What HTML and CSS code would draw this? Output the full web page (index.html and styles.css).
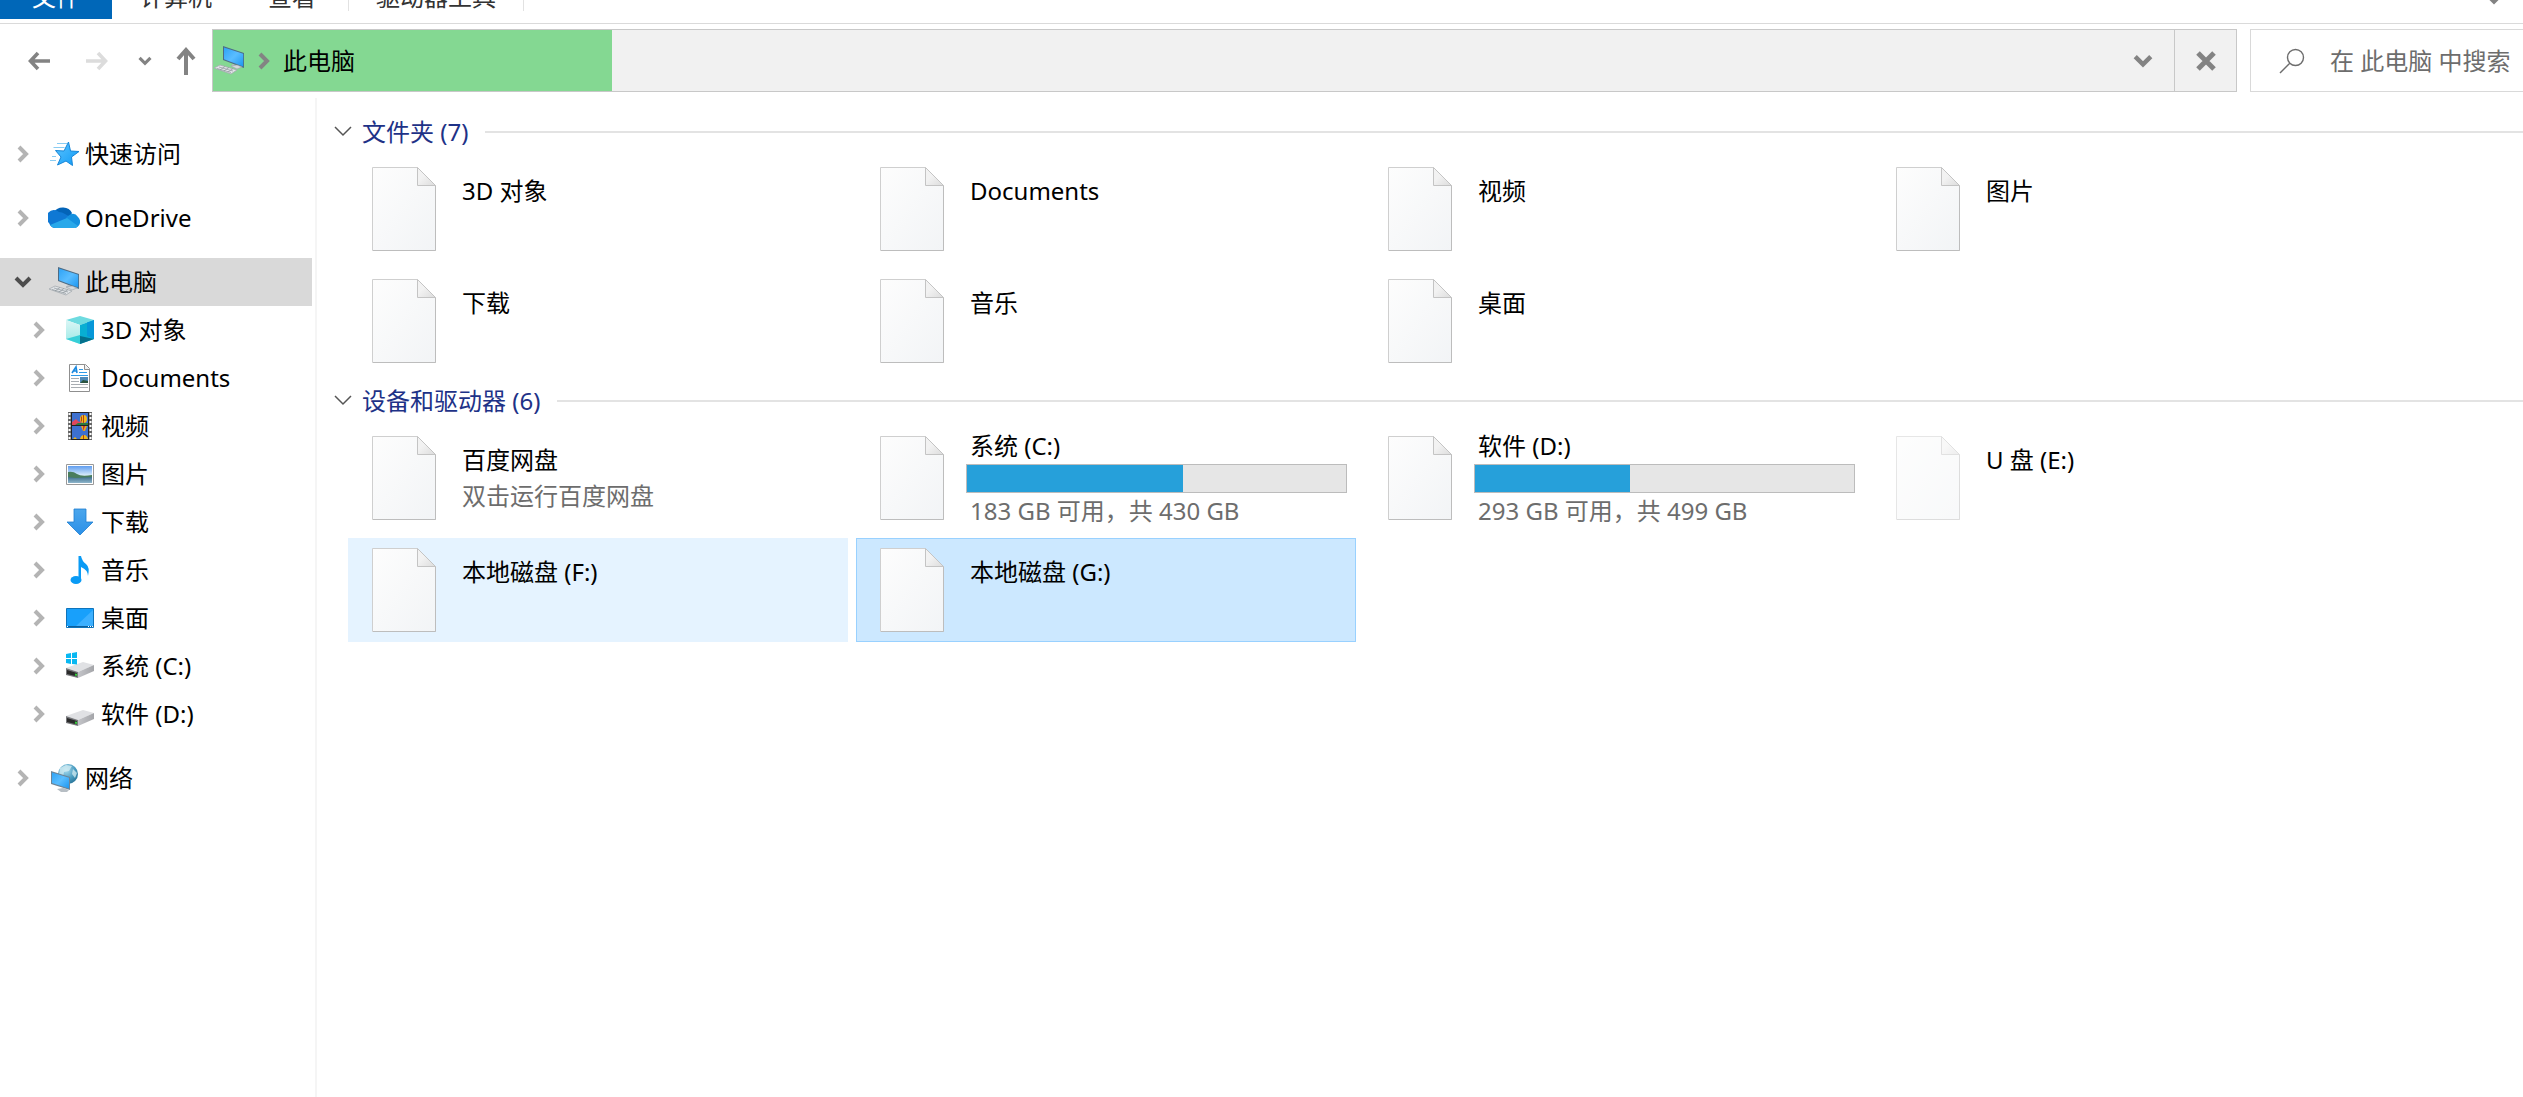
FILE: index.html
```
<!DOCTYPE html>
<html lang="zh-CN">
<head>
<meta charset="utf-8">
<title>此电脑</title>
<link rel="stylesheet" href="styles.css">
</head>
<body>
<svg class="sprite" width="0" height="0" aria-hidden="true">
  <defs>
    <linearGradient id="g-screen" x1="0" y1="0" x2="1" y2="1"><stop offset="0" stop-color="#2ea3f5"/><stop offset=".5" stop-color="#5abdff"/><stop offset="1" stop-color="#1c96f0"/></linearGradient>
    <linearGradient id="g-star" x1="0" y1="0" x2="1" y2="1"><stop offset="0" stop-color="#5cc4ff"/><stop offset="1" stop-color="#109af5"/></linearGradient>
    <linearGradient id="g-paper" x1="0" y1="0" x2="1" y2="1"><stop offset="0" stop-color="#fdfdfd"/><stop offset="1" stop-color="#f2f4f6"/></linearGradient>
    <linearGradient id="g-fold" x1="0" y1="0" x2="1" y2="1"><stop offset=".4" stop-color="#f2f2f2"/><stop offset="1" stop-color="#dcdcdc"/></linearGradient>
    <linearGradient id="g-down" x1="0" y1="0" x2="0" y2="1"><stop offset="0" stop-color="#4ba6ec"/><stop offset="1" stop-color="#2b90e8"/></linearGradient>
    <linearGradient id="g-sky" x1="0" y1="0" x2="0" y2="1"><stop offset="0" stop-color="#5f9df0"/><stop offset=".6" stop-color="#e4f3fb"/><stop offset="1" stop-color="#9cc4da"/></linearGradient>
    <linearGradient id="g-lake" x1="0" y1="0" x2="0" y2="1"><stop offset="0" stop-color="#3f6f8c"/><stop offset="1" stop-color="#8fb6cc"/></linearGradient>
    <linearGradient id="g-left" x1="0" y1="0" x2="0" y2="1"><stop offset="0" stop-color="#dcf6f5"/><stop offset="1" stop-color="#9be9e6"/></linearGradient>
    <linearGradient id="g-disk" x1="0" y1="0" x2="1" y2="0"><stop offset="0" stop-color="#c4c5c9"/><stop offset="1" stop-color="#a4a5a9"/></linearGradient>
    <radialGradient id="g-globe" cx=".4" cy=".3" r=".8"><stop offset="0" stop-color="#a9dcf0"/><stop offset=".6" stop-color="#4598bd"/><stop offset="1" stop-color="#236b8e"/></radialGradient>
  </defs>
  <symbol id="i-right" viewBox="0 0 12 18"><path d="M2 2l7 7-7 7" fill="none" stroke="currentColor" stroke-width="4"/></symbol>
  <symbol id="i-down" viewBox="0 0 18 12"><path d="M2 2l7 7 7-7" fill="none" stroke="currentColor" stroke-width="4"/></symbol>
  <symbol id="i-thin" viewBox="0 0 18 12"><path d="M1 1l8 8 8-8" fill="none" stroke="currentColor" stroke-width="1.500"/></symbol>
  <symbol id="i-back" viewBox="0 0 22 20"><path d="M2 10h20M10 2L2.500 10l7.500 8" fill="none" stroke="currentColor" stroke-width="3.600"/></symbol>
  <symbol id="i-forward" viewBox="0 0 22 20"><path d="M20 10H0M12 2l7.500 8-7.500 8" fill="none" stroke="currentColor" stroke-width="3.600"/></symbol>
  <symbol id="i-up" viewBox="0 0 20 28"><path d="M10 2v26M2 12l8-9 8 9" fill="none" stroke="currentColor" stroke-width="4"/></symbol>
  <symbol id="i-close" viewBox="0 0 20 20"><path d="M2 2l16 16M18 2L2 18" fill="none" stroke="currentColor" stroke-width="5"/></symbol>
  <symbol id="i-search" viewBox="0 0 26 26"><circle cx="16.500" cy="9.500" r="8" fill="none" stroke="currentColor" stroke-width="1.400"/><path d="M10.800 15.200L1 25" stroke="currentColor" stroke-width="1.400"/></symbol>
  <symbol id="i-file" viewBox="0 0 64 84"><path d="M.5.500h45l18 18v65H.5z" fill="url(#g-paper)" stroke="#cfcfcf"/><path d="M63.500 18.500v65H1" fill="none" stroke="#bdbdbd"/><path d="M45.500.500l18 18h-18z" fill="url(#g-fold)" stroke="#c4c4c4"/></symbol>
  <symbol id="i-pc" viewBox="0 0 32 32"><path d="M20 19l5 2-1 2-6-2z" fill="#b9c0c6"/><path d="M10 1l21 7v15L10 15z" fill="#4d6b84"/><path d="M11 2.400l19.200 6.300v12.800L11 14.200z" fill="url(#g-screen)"/><path d="M18 21l6-1 5 2-5 2z" fill="#d5d9dc" stroke="#9ba3a9" stroke-width=".6"/><path d="M1 23l6-3 17 5-6 4z" fill="#e2e5e8" stroke="#a3a9ae" stroke-width=".8"/><path d="M4 23.500l14 4M6 22l14 4M7 25l5-3.500M11 26l5-3.500M15 27l5-3.500" stroke="#8e969c" stroke-width=".7"/></symbol>
  <symbol id="i-star" viewBox="0 0 32 32"><path d="M20.500 4l2 9 8.500.500-7.500 5.500 1 8.500-6.500-4.500-8.500 4 3.500-8-5.500-6.500 8.500.500z" fill="url(#g-star)" stroke="#1686d8"/><path d="M9 5.500h10M5.500 9.500h11M2 22.500h6M4 18.500h4" stroke="#8accf2" stroke-width="1.200"/></symbol>
  <symbol id="i-cloud" viewBox="0 0 32 32"><path d="M6 10a10 9 0 0 1 18 1l-4 7-14-3z" fill="#0364b8"/><path d="M1 21a7 7 0 0 1 10-11q3 0 6 2l7 4-12 10H7q-4 0-6-5z" fill="#0f78d4"/><path d="M20 14q6-5 10 1c4 4 2 10-3 11l-9-10z" fill="#1490df"/><path d="M2 23l17-7 11 8q-1 2-4 2H8q-4 0-6-3z" fill="#28a8ea"/></symbol>
  <symbol id="i-cube" viewBox="0 0 28 28"><path d="M0 4l14-4 14 4-14 5z" fill="#6edbe0"/><path d="M0 4l14 5v19L0 23z" fill="url(#g-left)"/><path d="M14 9l14-5v19l-14 5z" fill="#08aed2"/><path d="M21 6.500L28 4v19l-7-3z" fill="#0697d8"/><path d="M0 23l14-4v9z" fill="#37cfd8"/><path d="M14 20l14 3-14 5z" fill="#05708c"/></symbol>
  <symbol id="i-doc" viewBox="0 0 28 28"><path d="M3.500.500h16l4 4v23h-20z" fill="#fff" stroke="#8f8f8f"/><path d="M18.500.500v5h5" fill="#eee" stroke="#8f8f8f"/><path d="M6 9l4-6 1 6M7 7h4" fill="none" stroke="#1c8ae0" stroke-width="1.600"/><path d="M13 5.500h4M13 8.500h8M5 11.500h17" stroke="#2f9be8"/><path d="M5 14.500h8M5 17.500h8M5 20.500h17M5 23.500h17" stroke="#a8adb2"/><path d="M14 13h8v6h-8z" fill="#4e88b6"/><path d="M14 19l3-3 5 1v2z" fill="#2b5440"/></symbol>
  <symbol id="i-film" viewBox="0 0 28 28"><path d="M2 0h24v28H2z" fill="#666"/><path d="M3.500 1v27M24.500 1v27" stroke="#fff" stroke-width="2" stroke-dasharray="2 2"/><path d="M5 0h18v28H5z" fill="#222"/><path d="M6 1h16v12H6zM6 14h16v13H6z" fill="#3d70cf"/><path d="M6 10l4-3 3 3 2-1v4H6z" fill="#e0475c"/><path d="M12 11h10v2H9z" fill="#2b7a3e"/><ellipse cx="17.500" cy="7" rx="3.500" ry="4" fill="#f3b91c"/><path d="M17.500 3v8M15.500 4.500v5" stroke="#b44218"/><path d="M15 14h6l-2 5h-2z" fill="#e8a71c"/><path d="M17 14v5l2-5" fill="#c22f3d"/><path d="M14 27q1-4 4-4t4 4zM7 27l2-2 2 2z" fill="#f0b61a"/><path d="M17.500 23v4" stroke="#b44218"/></symbol>
  <symbol id="i-image" viewBox="0 0 28 28"><path d="M.5 4.500h27v20H.5z" fill="#fff" stroke="#999"/><path d="M2 6h24v17H2z" fill="url(#g-sky)"/><path d="M2 12q5-1 9 2t15 1v4H2z" fill="#4a7d5c"/><path d="M2 17l8 1 16-1v6H2z" fill="url(#g-lake)"/></symbol>
  <symbol id="i-arrow" viewBox="0 0 28 28"><path d="M8 1h12v13h7L14 27 1 14h7z" fill="url(#g-down)" stroke="#1f7fd0" stroke-width=".8"/></symbol>
  <symbol id="i-note" viewBox="0 0 28 28"><ellipse cx="10" cy="24" rx="5.500" ry="4" fill="#0a9bf5"/><path d="M12.500 0H15q1 5 5 8t2 12q0-6-7-9v13h-2.500z" fill="#0a9bf5"/></symbol>
  <symbol id="i-desk" viewBox="0 0 28 28"><path d="M.5 4.500h27v19H.5z" fill="#18a0fb" stroke="#0f74bb"/><path d="M10 22L27 6v16z" fill="#3db0ff"/><path d="M1 22.500h26" stroke="#0c5f9c"/><path d="M1 22.500h2M22 22.500h5" stroke="#fff" stroke-dasharray="1 1"/></symbol>
  <symbol id="i-disk" viewBox="0 0 28 28"><path d="M0 16l17-6 11 3-16 7z" fill="#e0e1e4"/><path d="M12 20l16-7v6l-16 7z" fill="url(#g-disk)"/><path d="M0 16l12 4v6L0 23z" fill="#77787c"/><path d="M1 18l10 3v3.500L1 22z" fill="#2a2a2a"/><path d="M9 22.500l2 .5" stroke="#35d13a" stroke-width="2"/></symbol>
  <symbol id="i-sysdisk" viewBox="0 0 28 28"><use href="#i-disk"/><path d="M0 2l5-1v5H0zM6 1l5-1v6H6zM0 7h5v5l-5-1zM6 7h5v5.500L6 12z" fill="#09b8f2"/></symbol>
  <symbol id="i-network" viewBox="0 0 32 32"><circle cx="20" cy="12" r="10" fill="url(#g-globe)"/><path d="M12 6l6-3 6 1-3 5-5 1-1 5-4-3zM25 7l4 4-2 5-3-4z" fill="#d5edf3" opacity=".75"/><path d="M9 27l6-1 6 2-2 2h-6z" fill="#b7bec4"/><path d="M3 9l19 6v13L3 22z" fill="#6d8496"/><path d="M4 10.400l17 5.300v10.800L4 21z" fill="url(#g-screen)"/></symbol>
</svg>

<header>
  <nav class="ribbon" aria-label="功能区">
    <a class="tab tab-file" href="#">文件</a>
    <a class="tab" href="#">计算机</a>
    <a class="tab" href="#">查看</a>
    <a class="tab tab-tools" href="#">驱动器工具</a>
    <button class="ribbon-toggle" aria-label="展开功能区"><svg width="14" height="10"><use href="#i-down"/></svg></button>
  </nav>
  <div class="toolbar">
    <div class="history">
      <button class="wide" aria-label="后退"><svg width="22" height="20"><use href="#i-back"/></svg></button>
      <button class="wide faded" aria-label="前进"><svg width="22" height="20"><use href="#i-forward"/></svg></button>
      <button class="small" aria-label="最近浏览的位置"><svg width="14" height="10"><use href="#i-down"/></svg></button>
      <button class="up" aria-label="上移"><svg width="20" height="28"><use href="#i-up"/></svg></button>
    </div>
    <div class="address">
      <div class="path" style="width: 19.7%">
        <svg width="32" height="32"><use href="#i-pc"/></svg>
        <svg class="path-arrow" width="12" height="18"><use href="#i-right"/></svg>
        <a href="#">此电脑</a>
      </div>
      <button class="address-drop" aria-label="以前的位置"><svg width="20" height="14"><use href="#i-down"/></svg></button>
      <button class="address-stop" aria-label="停止"><svg width="20" height="20"><use href="#i-close"/></svg></button>
    </div>
    <label class="search">
      <svg width="26" height="26"><use href="#i-search"/></svg>
      <input type="text" aria-label="搜索" placeholder="在 此电脑 中搜索">
    </label>
  </div>
</header>

<div class="content">
  <nav class="sidebar" aria-label="导航窗格">
    <div class="group">
      <a class="node" href="#"><svg class="arrow"><use href="#i-right"/></svg><svg class="icon"><use href="#i-star"/></svg>快速访问</a>
    </div>
    <div class="group">
      <a class="node" href="#"><svg class="arrow"><use href="#i-right"/></svg><svg class="icon"><use href="#i-cloud"/></svg>OneDrive</a>
    </div>
    <div class="group">
      <a class="node current" href="#"><svg class="arrow"><use href="#i-down"/></svg><svg class="icon"><use href="#i-pc"/></svg>此电脑</a>
      <a class="node child" href="#"><svg class="arrow"><use href="#i-right"/></svg><svg class="icon"><use href="#i-cube"/></svg>3D 对象</a>
      <a class="node child" href="#"><svg class="arrow"><use href="#i-right"/></svg><svg class="icon"><use href="#i-doc"/></svg>Documents</a>
      <a class="node child" href="#"><svg class="arrow"><use href="#i-right"/></svg><svg class="icon"><use href="#i-film"/></svg>视频</a>
      <a class="node child" href="#"><svg class="arrow"><use href="#i-right"/></svg><svg class="icon"><use href="#i-image"/></svg>图片</a>
      <a class="node child" href="#"><svg class="arrow"><use href="#i-right"/></svg><svg class="icon"><use href="#i-arrow"/></svg>下载</a>
      <a class="node child" href="#"><svg class="arrow"><use href="#i-right"/></svg><svg class="icon"><use href="#i-note"/></svg>音乐</a>
      <a class="node child" href="#"><svg class="arrow"><use href="#i-right"/></svg><svg class="icon"><use href="#i-desk"/></svg>桌面</a>
      <a class="node child" href="#"><svg class="arrow"><use href="#i-right"/></svg><svg class="icon"><use href="#i-sysdisk"/></svg>系统 (C:)</a>
      <a class="node child" href="#"><svg class="arrow"><use href="#i-right"/></svg><svg class="icon"><use href="#i-disk"/></svg>软件 (D:)</a>
    </div>
    <div class="group">
      <a class="node" href="#"><svg class="arrow"><use href="#i-right"/></svg><svg class="icon"><use href="#i-network"/></svg>网络</a>
    </div>
  </nav>

  <main>
    <section>
      <h2><svg width="18" height="12"><use href="#i-thin"/></svg>文件夹 (7)</h2>
      <div class="tiles">
        <a class="tile" href="#"><svg class="file"><use href="#i-file"/></svg><span class="info"><span class="name">3D 对象</span></span></a>
        <a class="tile" href="#"><svg class="file"><use href="#i-file"/></svg><span class="info"><span class="name">Documents</span></span></a>
        <a class="tile" href="#"><svg class="file"><use href="#i-file"/></svg><span class="info"><span class="name">视频</span></span></a>
        <a class="tile" href="#"><svg class="file"><use href="#i-file"/></svg><span class="info"><span class="name">图片</span></span></a>
        <a class="tile" href="#"><svg class="file"><use href="#i-file"/></svg><span class="info"><span class="name">下载</span></span></a>
        <a class="tile" href="#"><svg class="file"><use href="#i-file"/></svg><span class="info"><span class="name">音乐</span></span></a>
        <a class="tile" href="#"><svg class="file"><use href="#i-file"/></svg><span class="info"><span class="name">桌面</span></span></a>
      </div>
    </section>
    <section>
      <h2><svg width="18" height="12"><use href="#i-thin"/></svg>设备和驱动器 (6)</h2>
      <div class="tiles">
        <a class="tile" href="#"><svg class="file"><use href="#i-file"/></svg><span class="info"><span class="name">百度网盘</span><span class="note">双击运行百度网盘</span></span></a>
        <a class="tile drive" href="#"><svg class="file"><use href="#i-file"/></svg><span class="info"><span class="name">系统 (C:)</span><progress value="57" max="100" aria-label="系统 (C:) 已用空间"></progress><span class="note">183 GB 可用，共 430 GB</span></span></a>
        <a class="tile drive" href="#"><svg class="file"><use href="#i-file"/></svg><span class="info"><span class="name">软件 (D:)</span><progress value="41" max="100" aria-label="软件 (D:) 已用空间"></progress><span class="note">293 GB 可用，共 499 GB</span></span></a>
        <a class="tile hidden-item" href="#"><svg class="file"><use href="#i-file"/></svg><span class="info"><span class="name">U 盘 (E:)</span></span></a>
        <a class="tile hovered" href="#"><svg class="file"><use href="#i-file"/></svg><span class="info"><span class="name">本地磁盘 (F:)</span></span></a>
        <a class="tile selected" href="#"><svg class="file"><use href="#i-file"/></svg><span class="info"><span class="name">本地磁盘 (G:)</span></span></a>
      </div>
    </section>
  </main>
</div>
</body>
</html>
```
FILE: styles.css
```
* {
  box-sizing: border-box;
}

body {
  margin: 0;
  min-height: 100vh;
  display: flex;
  flex-direction: column;
  background: #fff;
  color: #000;
  font-family: "Noto Sans", "Noto Sans CJK SC", sans-serif;
  font-size: 24px;
  line-height: 36px;
}

a {
  color: inherit;
  text-decoration: none;
}

button {
  display: flex;
  align-items: center;
  justify-content: center;
  padding: 0;
  border: 0;
  background: none;
  color: #838383;
}

svg {
  flex: none;
}

.sprite {
  position: absolute;
}

/* Ribbon tabs, scrolled half out of the window */
.ribbon {
  display: flex;
  align-items: flex-end;
  height: 24px;
  padding-bottom: 4px;
  border-bottom: 1px solid #dadada;
  overflow: hidden;
  color: #333;
}

.tab {
  height: 40px;
  padding: 0 28px;
}

.tab-file {
  width: 112px;
  padding: 0 32px;
  background: #0067b8;
  color: #fff;
}

.tab-tools {
  margin-left: 4px;
  position: relative;
}

.tab-tools::before,
.tab-tools::after {
  content: "";
  position: absolute;
  bottom: 8px;
  left: 0;
  width: 1px;
  height: 24px;
  background: #e2e2e2;
}

.tab-tools::after {
  left: auto;
  right: 0;
}

.ribbon-toggle {
  align-items: flex-end;
  margin-left: auto;
  margin-right: 22px;
  height: 24px;
  padding-bottom: 14px;
}

/* Address bar row */
.toolbar {
  display: flex;
  height: 74px;
  padding: 5px 0 6px;
}

.history {
  display: flex;
  padding-left: 10px;
  width: 212px;
}

.wide {
  width: 58px;
}

.faded {
  color: #dcdcdc;
}

.small {
  width: 38px;
}

.up {
  width: 44px;
}

.address {
  flex: 1;
  display: flex;
  border: 1px solid #c8c8c8;
  background: #f1f1f1;
}

.path {
  display: flex;
  align-items: center;
  background: #84d892;
}

.path-arrow {
  margin: 0 13px;
  color: #838383;
}

.address-drop {
  width: 62px;
  margin-left: auto;
}

.address-stop {
  width: 62px;
  border-left: 1px solid #c8c8c8;
}

.search {
  display: flex;
  align-items: center;
  width: 273px;
  margin-left: 13px;
  padding-left: 28px;
  border: 1px solid #d9d9d9;
  border-right: 0;
  color: #6d6d6d;
}

.search input {
  flex: 1;
  min-width: 0;
  margin-left: 25px;
  padding: 0;
  border: 0;
  font: inherit;
  background: none;
}

.search input::placeholder {
  color: #6d6d6d;
}

/* Navigation pane */
.content {
  flex: 1;
  display: flex;
}

.sidebar {
  flex: none;
  width: 317px;
  padding: 32px 3px 0 0;
  border-right: 2px solid #f5f5f5;
}

.group {
  margin-bottom: 16px;
}

.node {
  display: flex;
  align-items: center;
  height: 48px;
  padding-left: 14px;
  white-space: nowrap;
}

.arrow {
  width: 18px;
  height: 18px;
  color: #b4b4b4;
}

.icon {
  width: 32px;
  height: 32px;
  margin: 0 5px 0 16px;
}

.child {
  padding-left: 30px;
}

.child .icon {
  width: 28px;
  height: 28px;
  margin: 0 7px 0 18px;
}

.current {
  background: #d9d9d9;
}

.current .arrow {
  color: #4d4d4d;
}

/* Item view */
main {
  flex: 1;
  padding: 9px 0 0 17px;
}

section {
  margin-bottom: 3px;
}

h2 {
  display: flex;
  align-items: center;
  height: 50px;
  margin: 0;
  font-size: 24px;
  font-weight: 400;
  color: #1e3287;
}

h2 svg {
  margin-right: 10px;
  color: #555;
}

h2::after {
  content: "";
  flex: 1;
  height: 2px;
  margin-left: 17px;
  background: #e3e3e3;
}

.tiles {
  display: grid;
  grid-template-columns: repeat(auto-fill, 500px);
  gap: 8px;
  padding-left: 14px;
}

.tile {
  display: flex;
  gap: 22px;
  height: 104px;
  padding: 9px 8px 9px 23px;
  border: 1px solid transparent;
}

.file {
  width: 64px;
  height: 84px;
}

.info {
  flex: 1;
  display: flex;
  flex-direction: column;
  padding-top: 6px;
}

.name,
.note {
  padding-left: 4px;
}

.note {
  color: #6d6d6d;
}

.drive {
  padding-top: 0;
  padding-bottom: 0;
}

.drive .file {
  margin-top: 9px;
}

.drive .info {
  padding-top: 1px;
}

progress {
  appearance: none;
  display: block;
  width: 100%;
  height: 29px;
  border: 1px solid #bcbcbc;
  background: #e6e6e6;
}

progress::-webkit-progress-bar {
  background: #e6e6e6;
}

progress::-webkit-progress-value {
  background: #26a0da;
}

.hidden-item .file {
  opacity: 0.5;
}

.hovered {
  background: #e5f3ff;
}

.selected {
  background: #cce8ff;
  border-color: #99d1ff;
}
```
